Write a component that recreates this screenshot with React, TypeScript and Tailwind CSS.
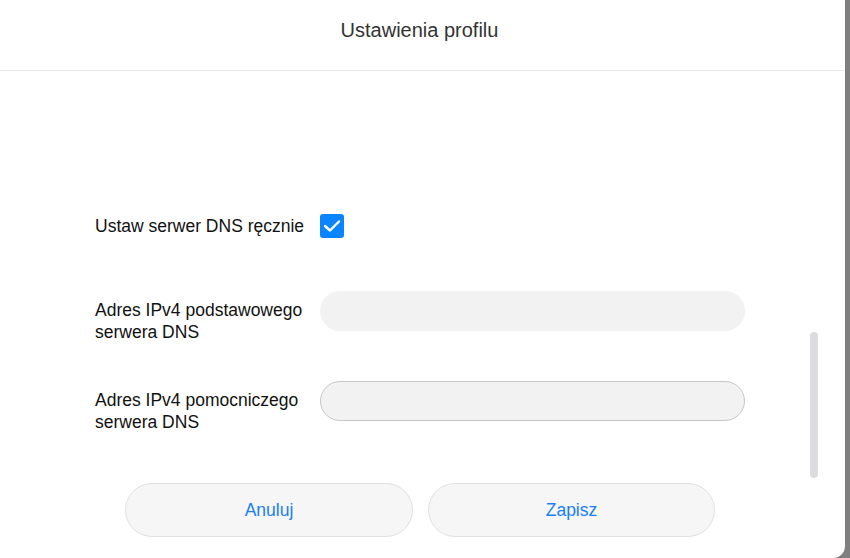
import React, { useState } from "react";

export default function App() {
  const [manual, setManual] = useState(true);

  return (
    <div
      className="flex h-[558px] w-[850px] overflow-hidden bg-[#7f7f7f]"
      style={{ fontFamily: '"Liberation Sans", Arial, sans-serif' }}
    >
      <div className="relative h-[558px] w-[845px] overflow-hidden rounded-br-[12px] bg-white">
        <header className="flex h-[71px] justify-center border-b border-[#e8e8e8] pr-[6px] pt-[18px]">
          <h1 className="text-[20px] leading-[24px] text-[#333]">Ustawienia profilu</h1>
        </header>

        <div className="flex flex-col pl-[95px] pt-[143px]">
          <div className="flex h-[24px] items-center">
            <span className="w-[225px] text-[17.5px] text-[#111]">
              Ustaw serwer DNS ręcznie
            </span>
            <button
              onClick={() => setManual((p) => !p)}
              className={`flex h-[24px] w-[24px] items-center justify-center rounded-[3px] ${
                manual ? "bg-[#0a84ff]" : "border border-[#c8c8cc] bg-white"
              }`}
            >
              {manual && (
                <svg width="24" height="24" viewBox="0 0 24 24" fill="none">
                  <path
                    d="M5 12 L10 16.5 L19 7.5"
                    stroke="white"
                    strokeWidth="2.4"
                    strokeLinecap="round"
                    strokeLinejoin="round"
                  />
                </svg>
              )}
            </button>
          </div>

          <div className="mt-[53px] flex items-start">
            <label className="w-[225px] pt-[8px] text-[17.5px] leading-[22px] text-[#111]">
              Adres IPv4 podstawowego
              <br />
              serwera DNS
            </label>
            <input className="h-[40px] w-[425px] rounded-full bg-[#f2f2f2] px-4 text-[16px] outline-none" />
          </div>

          <div className="mt-[38px] flex items-start">
            <label className="w-[225px] pt-[8px] text-[17.5px] leading-[22px] text-[#111]">
              Adres IPv4 pomocniczego
              <br />
              serwera DNS
            </label>
            <input className="h-[40px] w-[425px] rounded-full border border-[#c6c6cb] bg-[#f2f2f2] px-4 text-[16px] outline-none" />
          </div>
        </div>

        <div className="absolute right-[27px] top-[332px] h-[146px] w-[8px] rounded-full bg-[#dcdcdf]" />

        <div className="mt-[50px] flex gap-[15px] pl-[125px]">
          <button className="h-[54px] w-[288px] rounded-full border border-[#e0e0e5] bg-[#f6f6f6] text-[17.5px] text-[#1a7ff5]">
            Anuluj
          </button>
          <button className="h-[54px] w-[287px] rounded-full border border-[#e0e0e5] bg-[#f6f6f6] text-[17.5px] text-[#1a7ff5]">
            Zapisz
          </button>
        </div>
      </div>
    </div>
  );
}
